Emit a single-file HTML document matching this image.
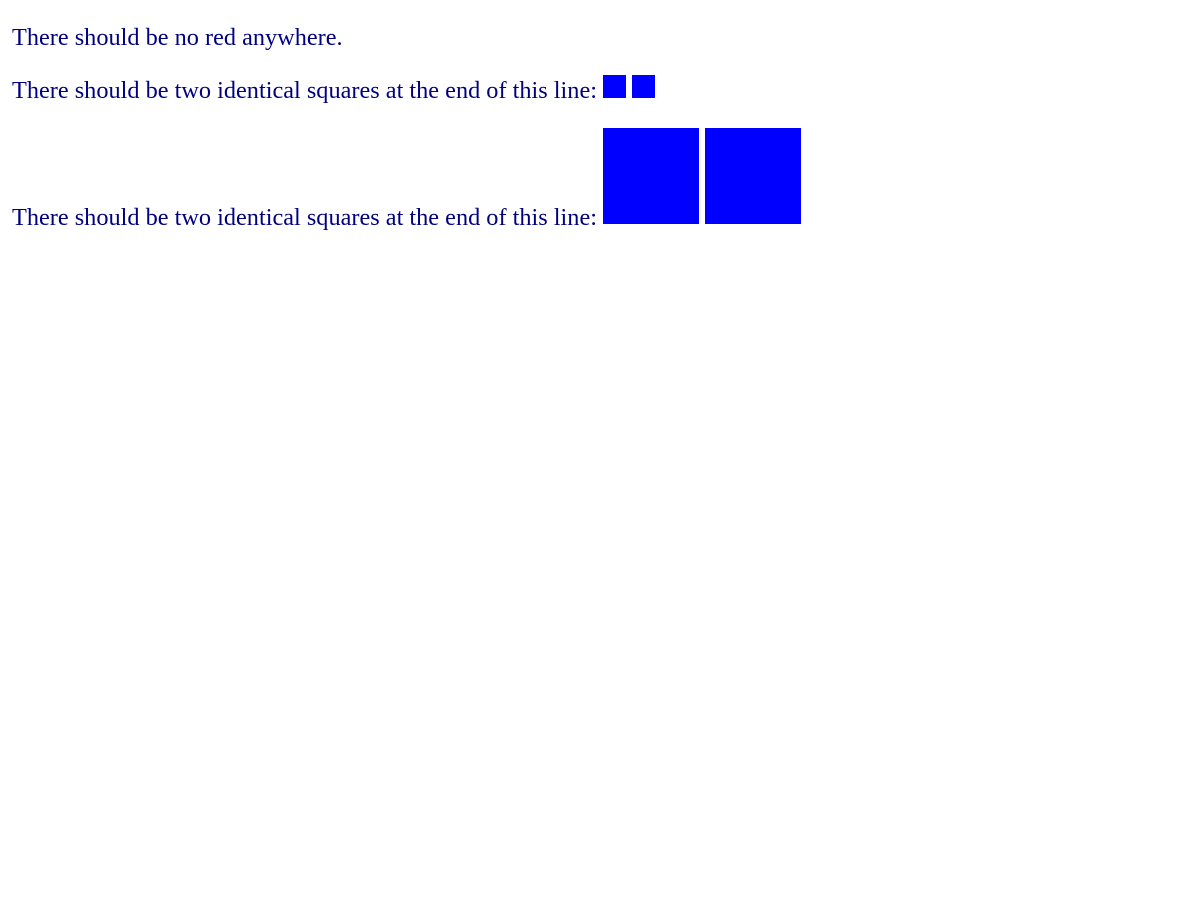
<!DOCTYPE html>
<html><head><style>
html,body{margin:0;background:#fff;width:1200px;height:900px;overflow:hidden}
.t{position:absolute;left:12px;font-family:"Liberation Serif",serif;font-size:24.3px;color:#000080;line-height:28px;white-space:nowrap}
.s{position:absolute;background:#0000ff}
</style></head><body>
<div class="t" style="top:24px">There should be no red anywhere.</div>
<div class="t" style="top:77px">There should be two identical squares at the end of this line:</div>
<div class="s" style="left:603px;top:75px;width:23px;height:23px"></div>
<div class="s" style="left:632px;top:75px;width:23px;height:23px"></div>
<div class="t" style="top:204px">There should be two identical squares at the end of this line:</div>
<div class="s" style="left:603px;top:128px;width:96px;height:96px"></div>
<div class="s" style="left:705px;top:128px;width:96px;height:96px"></div>
</body></html>
